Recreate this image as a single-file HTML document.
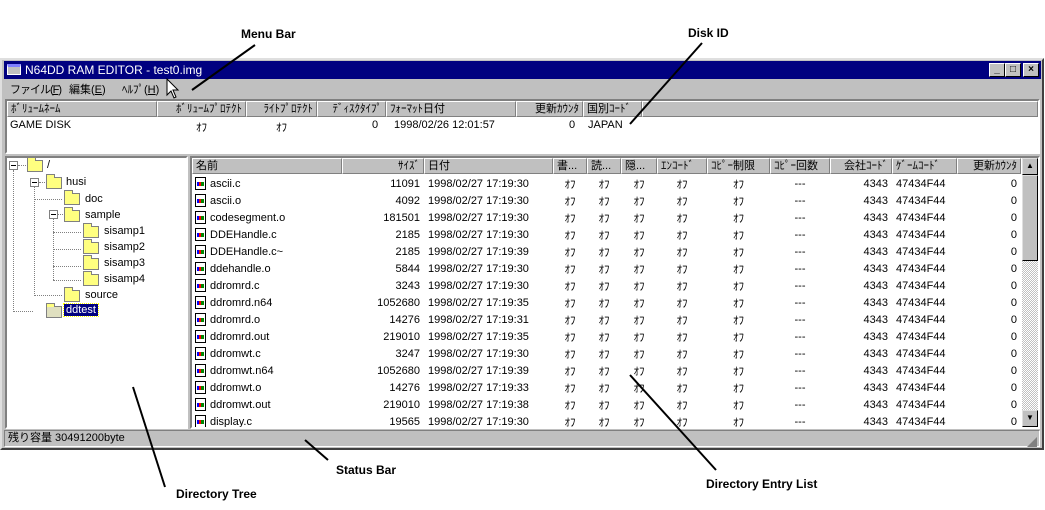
<!DOCTYPE html>
<html><head><meta charset="utf-8">
<style>
*{box-sizing:border-box;margin:0;padding:0}
body{width:1045px;height:510px;background:#fff;position:relative;overflow:hidden;font-family:"Liberation Sans","Noto Sans CJK JP",sans-serif;font-size:11px;color:#000}
.a{position:absolute}
.win{left:0;top:58px;width:1044px;height:392px;background:#c0c0c0;border-top:2px solid #dfdfdf;border-left:2px solid #dfdfdf;border-right:2px solid #404040;border-bottom:2px solid #404040}
.title{left:4px;top:61px;width:1037px;height:18px;background:#000080;color:#fff;font-size:12px;line-height:18px}
.tb{width:16px;height:14px;top:63px;background:#c0c0c0;border:1px solid;border-color:#fff #000 #000 #fff;font-size:10px;line-height:12px;text-align:center;font-weight:bold}
.sunk{border:2px solid;border-color:#808080 #fff #fff #808080;background:#fff}
.hd{position:absolute;height:16px;background:#c0c0c0;border:1px solid;border-color:#fff #808080 #808080 #fff;line-height:14px;padding:0 3px;white-space:nowrap;overflow:hidden}
.r{text-align:right}
table{border-collapse:collapse;table-layout:fixed;position:absolute;left:0;top:17px}
td{height:17px;white-space:nowrap;overflow:hidden;padding:0 4px;font-size:11px}
.ic{display:inline-block;width:11px;height:13px;border:1px solid #000;background:#fff;vertical-align:-3px;margin-right:4px;position:relative}
.ic:after{content:"";position:absolute;left:1px;top:4px;width:7px;height:4px;background:linear-gradient(90deg,#00f 0 2px,#f00 2px 4px,#080 4px)}
.fold{position:absolute;width:16px;height:12px;background:#ffff80;border:1px solid #808080}
.fold:before{content:"";position:absolute;left:-1px;top:-4px;width:7px;height:3px;background:#ffff80;border:1px solid #808080;border-bottom:none}
.pm{position:absolute;width:9px;height:9px;border:1px solid #808080;background:#fff}
.pm:after{content:"";position:absolute;left:1px;top:3px;width:5px;height:1px;background:#000}
.dl{position:absolute;border-left:1px dotted #808080}
.dh{position:absolute;border-top:1px dotted #808080}
.lab{font-weight:bold;font-size:12px;position:absolute}
</style></head><body>
<div class="a win"></div>
<div class="a title"><span style="display:inline-block;width:14px;height:11px;border:1px solid #fff;background:#c0c0c0;vertical-align:-1px;margin:0 4px 0 3px;border-top:3px solid #8080ff"></span>N64DD RAM EDITOR - test0.img</div>
<div class="a tb" style="left:989px">_</div>
<div class="a tb" style="left:1005px">□</div>
<div class="a tb" style="left:1023px">×</div>
<div class="a" style="left:10px;top:81px;font-size:11px;letter-spacing:-1px">ファイル(<u>F</u>)</div>
<div class="a" style="left:69px;top:81px;font-size:11px">編集(<u>E</u>)</div>
<div class="a" style="left:122px;top:81px;font-size:11px">ﾍﾙﾌﾟ(<u>H</u>)</div>
<!-- disk panel -->
<div class="a sunk" style="left:5px;top:99px;width:1035px;height:55px"></div>
<div class="hd" style="left:7px;top:101px;width:150px">ﾎﾞﾘｭｰﾑﾈｰﾑ</div>
<div class="hd r" style="left:157px;top:101px;width:89px">ﾎﾞﾘｭｰﾑﾌﾟﾛﾃｸﾄ</div>
<div class="hd r" style="left:246px;top:101px;width:71px">ﾗｲﾄﾌﾟﾛﾃｸﾄ</div>
<div class="hd r" style="left:317px;top:101px;width:69px">ﾃﾞｨｽｸﾀｲﾌﾟ</div>
<div class="hd" style="left:386px;top:101px;width:130px">ﾌｫｰﾏｯﾄ日付</div>
<div class="hd r" style="left:516px;top:101px;width:67px">更新ｶｳﾝﾀ</div>
<div class="hd" style="left:583px;top:101px;width:59px">国別ｺｰﾄﾞ</div>
<div class="hd" style="left:642px;top:101px;width:396px"></div>
<div class="a" style="left:10px;top:119px">GAME DISK</div>
<div class="a" style="left:196px;top:119px">ｵﾌ</div>
<div class="a" style="left:276px;top:119px">ｵﾌ</div>
<div class="a" style="left:372px;top:119px">0</div>
<div class="a" style="left:394px;top:119px">1998/02/26 12:01:57</div>
<div class="a" style="left:569px;top:119px">0</div>
<div class="a" style="left:588px;top:119px">JAPAN</div>
<!-- tree -->
<div class="a sunk" style="left:5px;top:156px;width:183px;height:273px"></div>
<div class="dl" style="left:13px;top:170px;height:142px"></div>
<div class="dl" style="left:34px;top:187px;height:109px"></div>
<div class="dl" style="left:53px;top:219px;height:61px"></div>
<div class="dh" style="left:13px;top:311px;width:20px"></div>
<div class="dh" style="left:34px;top:199px;width:28px"></div>
<div class="dh" style="left:34px;top:295px;width:28px"></div>
<div class="dh" style="left:53px;top:232px;width:28px"></div>
<div class="dh" style="left:53px;top:249px;width:28px"></div>
<div class="dh" style="left:53px;top:266px;width:28px"></div>
<div class="dh" style="left:53px;top:280px;width:28px"></div>
<div class="dh" style="left:18px;top:165px;width:8px"></div>
<div class="dh" style="left:39px;top:182px;width:6px"></div>
<div class="dh" style="left:58px;top:214px;width:5px"></div>
<div class="pm" style="left:9px;top:161px"></div>
<div class="pm" style="left:30px;top:178px"></div>
<div class="pm" style="left:49px;top:210px"></div>
<div class="fold" style="left:27px;top:160px"></div><div class="a" style="left:47px;top:159px">/</div>
<div class="fold" style="left:46px;top:177px"></div><div class="a" style="left:66px;top:176px">husi</div>
<div class="fold" style="left:64px;top:193px"></div><div class="a" style="left:85px;top:193px">doc</div>
<div class="fold" style="left:64px;top:210px"></div><div class="a" style="left:85px;top:209px">sample</div>
<div class="fold" style="left:83px;top:226px"></div><div class="a" style="left:104px;top:225px">sisamp1</div>
<div class="fold" style="left:83px;top:242px"></div><div class="a" style="left:104px;top:241px">sisamp2</div>
<div class="fold" style="left:83px;top:258px"></div><div class="a" style="left:104px;top:257px">sisamp3</div>
<div class="fold" style="left:83px;top:274px"></div><div class="a" style="left:104px;top:273px">sisamp4</div>
<div class="fold" style="left:64px;top:290px"></div><div class="a" style="left:85px;top:289px">source</div>
<div class="fold" style="left:46px;top:306px;background:#e0e0c0"></div><div class="a" style="left:64px;top:304px;background:#000080;color:#fff;padding:0 2px;outline:1px dotted #ff0">ddtest</div>
<!-- list -->
<div class="a sunk" style="left:190px;top:156px;width:850px;height:273px;overflow:hidden">
<div class="hd" style="left:0;top:0;width:150px">名前</div>
<div class="hd r" style="left:150px;top:0;width:82px">ｻｲｽﾞ</div>
<div class="hd" style="left:232px;top:0;width:129px">日付</div>
<div class="hd" style="left:361px;top:0;width:34px">書...</div>
<div class="hd" style="left:395px;top:0;width:34px">読...</div>
<div class="hd" style="left:429px;top:0;width:36px">隠...</div>
<div class="hd" style="left:465px;top:0;width:50px">ｴﾝｺｰﾄﾞ</div>
<div class="hd" style="left:515px;top:0;width:63px">ｺﾋﾟｰ制限</div>
<div class="hd" style="left:578px;top:0;width:60px">ｺﾋﾟｰ回数</div>
<div class="hd r" style="left:638px;top:0;width:62px">会社ｺｰﾄﾞ</div>
<div class="hd" style="left:700px;top:0;width:65px">ｹﾞｰﾑｺｰﾄﾞ</div>
<div class="hd r" style="left:765px;top:0;width:64px">更新ｶｳﾝﾀ</div>
<table>
<colgroup><col style="width:150px"><col style="width:82px"><col style="width:129px"><col style="width:34px"><col style="width:34px"><col style="width:36px"><col style="width:50px"><col style="width:63px"><col style="width:60px"><col style="width:62px"><col style="width:65px"><col style="width:64px"></colgroup>
<tbody style="text-align:center">
<tr><td style="text-align:left;padding-left:3px"><span class="ic"></span>ascii.c</td><td class="r">11091</td><td style="text-align:left">1998/02/27 17:19:30</td><td>ｵﾌ</td><td>ｵﾌ</td><td>ｵﾌ</td><td>ｵﾌ</td><td>ｵﾌ</td><td>---</td><td class="r">4343</td><td style="text-align:left">47434F44</td><td class="r">0</td></tr>
<tr><td style="text-align:left;padding-left:3px"><span class="ic"></span>ascii.o</td><td class="r">4092</td><td style="text-align:left">1998/02/27 17:19:30</td><td>ｵﾌ</td><td>ｵﾌ</td><td>ｵﾌ</td><td>ｵﾌ</td><td>ｵﾌ</td><td>---</td><td class="r">4343</td><td style="text-align:left">47434F44</td><td class="r">0</td></tr>
<tr><td style="text-align:left;padding-left:3px"><span class="ic"></span>codesegment.o</td><td class="r">181501</td><td style="text-align:left">1998/02/27 17:19:30</td><td>ｵﾌ</td><td>ｵﾌ</td><td>ｵﾌ</td><td>ｵﾌ</td><td>ｵﾌ</td><td>---</td><td class="r">4343</td><td style="text-align:left">47434F44</td><td class="r">0</td></tr>
<tr><td style="text-align:left;padding-left:3px"><span class="ic"></span>DDEHandle.c</td><td class="r">2185</td><td style="text-align:left">1998/02/27 17:19:30</td><td>ｵﾌ</td><td>ｵﾌ</td><td>ｵﾌ</td><td>ｵﾌ</td><td>ｵﾌ</td><td>---</td><td class="r">4343</td><td style="text-align:left">47434F44</td><td class="r">0</td></tr>
<tr><td style="text-align:left;padding-left:3px"><span class="ic"></span>DDEHandle.c~</td><td class="r">2185</td><td style="text-align:left">1998/02/27 17:19:39</td><td>ｵﾌ</td><td>ｵﾌ</td><td>ｵﾌ</td><td>ｵﾌ</td><td>ｵﾌ</td><td>---</td><td class="r">4343</td><td style="text-align:left">47434F44</td><td class="r">0</td></tr>
<tr><td style="text-align:left;padding-left:3px"><span class="ic"></span>ddehandle.o</td><td class="r">5844</td><td style="text-align:left">1998/02/27 17:19:30</td><td>ｵﾌ</td><td>ｵﾌ</td><td>ｵﾌ</td><td>ｵﾌ</td><td>ｵﾌ</td><td>---</td><td class="r">4343</td><td style="text-align:left">47434F44</td><td class="r">0</td></tr>
<tr><td style="text-align:left;padding-left:3px"><span class="ic"></span>ddromrd.c</td><td class="r">3243</td><td style="text-align:left">1998/02/27 17:19:30</td><td>ｵﾌ</td><td>ｵﾌ</td><td>ｵﾌ</td><td>ｵﾌ</td><td>ｵﾌ</td><td>---</td><td class="r">4343</td><td style="text-align:left">47434F44</td><td class="r">0</td></tr>
<tr><td style="text-align:left;padding-left:3px"><span class="ic"></span>ddromrd.n64</td><td class="r">1052680</td><td style="text-align:left">1998/02/27 17:19:35</td><td>ｵﾌ</td><td>ｵﾌ</td><td>ｵﾌ</td><td>ｵﾌ</td><td>ｵﾌ</td><td>---</td><td class="r">4343</td><td style="text-align:left">47434F44</td><td class="r">0</td></tr>
<tr><td style="text-align:left;padding-left:3px"><span class="ic"></span>ddromrd.o</td><td class="r">14276</td><td style="text-align:left">1998/02/27 17:19:31</td><td>ｵﾌ</td><td>ｵﾌ</td><td>ｵﾌ</td><td>ｵﾌ</td><td>ｵﾌ</td><td>---</td><td class="r">4343</td><td style="text-align:left">47434F44</td><td class="r">0</td></tr>
<tr><td style="text-align:left;padding-left:3px"><span class="ic"></span>ddromrd.out</td><td class="r">219010</td><td style="text-align:left">1998/02/27 17:19:35</td><td>ｵﾌ</td><td>ｵﾌ</td><td>ｵﾌ</td><td>ｵﾌ</td><td>ｵﾌ</td><td>---</td><td class="r">4343</td><td style="text-align:left">47434F44</td><td class="r">0</td></tr>
<tr><td style="text-align:left;padding-left:3px"><span class="ic"></span>ddromwt.c</td><td class="r">3247</td><td style="text-align:left">1998/02/27 17:19:30</td><td>ｵﾌ</td><td>ｵﾌ</td><td>ｵﾌ</td><td>ｵﾌ</td><td>ｵﾌ</td><td>---</td><td class="r">4343</td><td style="text-align:left">47434F44</td><td class="r">0</td></tr>
<tr><td style="text-align:left;padding-left:3px"><span class="ic"></span>ddromwt.n64</td><td class="r">1052680</td><td style="text-align:left">1998/02/27 17:19:39</td><td>ｵﾌ</td><td>ｵﾌ</td><td>ｵﾌ</td><td>ｵﾌ</td><td>ｵﾌ</td><td>---</td><td class="r">4343</td><td style="text-align:left">47434F44</td><td class="r">0</td></tr>
<tr><td style="text-align:left;padding-left:3px"><span class="ic"></span>ddromwt.o</td><td class="r">14276</td><td style="text-align:left">1998/02/27 17:19:33</td><td>ｵﾌ</td><td>ｵﾌ</td><td>ｵﾌ</td><td>ｵﾌ</td><td>ｵﾌ</td><td>---</td><td class="r">4343</td><td style="text-align:left">47434F44</td><td class="r">0</td></tr>
<tr><td style="text-align:left;padding-left:3px"><span class="ic"></span>ddromwt.out</td><td class="r">219010</td><td style="text-align:left">1998/02/27 17:19:38</td><td>ｵﾌ</td><td>ｵﾌ</td><td>ｵﾌ</td><td>ｵﾌ</td><td>ｵﾌ</td><td>---</td><td class="r">4343</td><td style="text-align:left">47434F44</td><td class="r">0</td></tr>
<tr><td style="text-align:left;padding-left:3px"><span class="ic"></span>display.c</td><td class="r">19565</td><td style="text-align:left">1998/02/27 17:19:30</td><td>ｵﾌ</td><td>ｵﾌ</td><td>ｵﾌ</td><td>ｵﾌ</td><td>ｵﾌ</td><td>---</td><td class="r">4343</td><td style="text-align:left">47434F44</td><td class="r">0</td></tr>
</tbody></table>
<div class="a" style="left:830px;top:0;width:16px;height:269px;background:repeating-conic-gradient(#c0c0c0 0 25%,#fff 0 50%) 0 0/2px 2px"></div>
<div class="a" style="left:830px;top:17px;width:16px;height:86px;background:#c0c0c0;border:1px solid;border-color:#dfdfdf #000 #000 #dfdfdf"></div>
<div class="a" style="left:830px;top:0;width:16px;height:17px;background:#c0c0c0;border:1px solid;border-color:#dfdfdf #000 #000 #dfdfdf;font-size:8px;text-align:center;line-height:14px">▲</div>
<div class="a" style="left:830px;top:252px;width:16px;height:17px;background:#c0c0c0;border:1px solid;border-color:#dfdfdf #000 #000 #dfdfdf;font-size:8px;text-align:center;line-height:14px">▼</div>
</div>
<!-- status -->
<div class="a" style="left:4px;top:430px;width:1036px;height:17px;border:1px solid;border-color:#808080 #fff #fff #808080;padding-left:3px;line-height:15px">残り容量 30491200byte</div>
<div class="a" style="left:1027px;top:434px;font-size:10px;color:#808080">◢</div>
<!-- annotations -->
<svg class="a" style="left:0;top:0" width="1045" height="510"><g stroke="#000" stroke-width="2">
<line x1="255" y1="45" x2="192" y2="90"/>
<line x1="702" y1="43" x2="630" y2="124"/>
<line x1="133" y1="387" x2="165" y2="487"/>
<line x1="305" y1="440" x2="328" y2="460"/>
<line x1="630" y1="375" x2="716" y2="470"/></g>
<path d="M167 79 L167 95 L171 91 L174 98 L176 97 L173 90 L178 90 Z" fill="#fff" stroke="#000"/></svg>
<div class="lab" style="left:241px;top:27px">Menu Bar</div>
<div class="lab" style="left:688px;top:26px">Disk ID</div>
<div class="lab" style="left:176px;top:487px">Directory Tree</div>
<div class="lab" style="left:336px;top:463px">Status Bar</div>
<div class="lab" style="left:706px;top:477px">Directory Entry List</div>
</body></html>
